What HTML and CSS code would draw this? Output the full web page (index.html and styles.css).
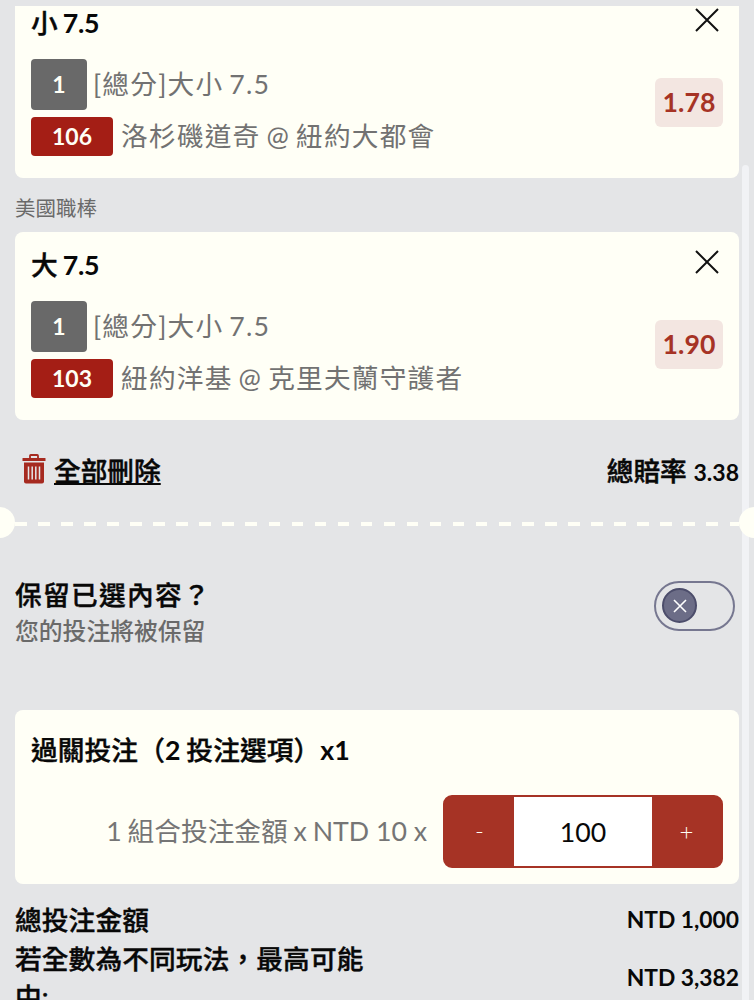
FILE: index.html
```html
<!DOCTYPE html>
<html lang="zh-Hant">
<head>
  <meta charset="UTF-8">
  <meta name="viewport" content="width=device-width, initial-scale=1.0">
  <title>投注單</title>
  <link rel="stylesheet" href="styles.css">
</head>
<body>
  <div class="slip">
    <div class="bets">
      <div class="card bet">
        <div class="bet-head">
          <h3 class="title">小 <b>7.5</b></h3>
          <svg class="close" viewBox="0 0 24 24"><path d="M1 1L23 23M23 1L1 23"/></svg>
        </div>
        <div class="bet-body">
          <div class="bet-info">
            <div class="line market"><span class="tag gray">1</span><span>[總分]大小 7.5</span></div>
            <div class="line match"><span class="tag red">106</span><span>洛杉磯道奇 @ 紐約大都會</span></div>
          </div>
          <span class="odds">1.78</span>
        </div>
      </div>

      <p class="league">美國職棒</p>

      <div class="card bet">
        <div class="bet-head">
          <h3 class="title">大 <b>7.5</b></h3>
          <svg class="close" viewBox="0 0 24 24"><path d="M1 1L23 23M23 1L1 23"/></svg>
        </div>
        <div class="bet-body">
          <div class="bet-info">
            <div class="line market"><span class="tag gray">1</span><span>[總分]大小 7.5</span></div>
            <div class="line match"><span class="tag red">103</span><span>紐約洋基 @ 克里夫蘭守護者</span></div>
          </div>
          <span class="odds">1.90</span>
        </div>
      </div>
    </div>

    <div class="summary">
      <div class="remove">
        <svg class="trash" viewBox="0 0 24 30">
          <path class="trash-line" d="M8 4.500V1.800Q8 1 8.800 1H15.200Q16 1 16 1.800V4.500"/>
          <path class="trash-fill" d="M1 4H23Q23.500 4 23.500 4.500V7H.5V4.500Q.5 4 1 4Z"/>
          <path class="trash-fill" d="M2 8.500H22V27.500Q22 29.500 20 29.500H4Q2 29.500 2 27.500Z"/>
          <path class="trash-slot" d="M6.500 12.500V25.500M10.200 12.500V25.500M13.800 12.500V25.500M17.500 12.500V25.500"/>
        </svg>
        <a class="remove-link">全部刪除</a>
      </div>
      <span class="total-odds">總賠率 <b>3.38</b></span>
    </div>

    <div class="tear">
      <span class="notch"></span>
      <span class="dashes"></span>
      <span class="notch"></span>
    </div>

    <div class="keep">
      <div>
        <h3 class="keep-title">保留已選內容？</h3>
        <p class="keep-note">您的投注將被保留</p>
      </div>
      <div class="toggle">
        <span class="knob">
          <svg viewBox="0 0 14 14"><path d="M1 1L13 13M13 1L1 13"/></svg>
        </span>
      </div>
    </div>

    <div class="card stake">
      <h3 class="title">過關投注（<b>2</b> 投注選項）<b>x1</b></h3>
      <div class="stake-row">
        <span class="stake-label">1 組合投注金額 x <span class="unit">NTD 10 x</span></span>
        <div class="stepper">
          <span class="step">-</span>
          <span class="amount">100</span>
          <span class="step plus">+</span>
        </div>
      </div>
    </div>

    <div class="totals">
      <div class="total">
        <span class="total-name">總投注金額</span>
        <span class="total-value">NTD 1,000</span>
      </div>
      <div class="total">
        <span class="total-name">若全數為不同玩法，最高可能中:</span>
        <span class="total-value">NTD 3,382</span>
      </div>
    </div>

    <div class="scrollbar"></div>
  </div>
</body>
</html>
```
FILE: styles.css
```css
* {
  box-sizing: border-box;
}

body {
  margin: 0;
  background: #e4e5e7;
  color: #080808;
  font-family: Lato, "Noto Sans CJK TC", sans-serif;
  font-size: 26.7px;
  overflow: hidden;
}

h3,
p {
  margin: 0;
  font-size: inherit;
}

.slip {
  position: relative;
  height: 1000px;
  padding-top: 6px;
  overflow: hidden;
}

/* scrolled list, the first card is cut at the top */
.bets {
  height: 414px;
  padding: 0 15px;
  display: flex;
  flex-direction: column;
  justify-content: flex-end;
  overflow: hidden;
}

.card {
  flex: none;
  background: #fffff6;
  border-radius: 8px;
  padding: 0 16px;
}

.bet {
  height: 188px;
}

.bet-head {
  display: flex;
  justify-content: space-between;
  padding-top: 13px;
  height: 69px;
}

.title {
  font-weight: 500;
  line-height: 40px;
  -webkit-text-stroke: 0.4px;
}

.title b {
  font-weight: 700;
  -webkit-text-stroke: 0;
}

.bet .title {
  letter-spacing: -0.3px;
  word-spacing: -1px;
}

.stake .title {
  letter-spacing: 0.1px;
  word-spacing: -1px;
}

.close {
  width: 24px;
  height: 24px;
  margin: 5px 4px 0 0;
  fill: none;
  stroke: #111;
  stroke-width: 2;
}

.bet-body {
  display: flex;
  justify-content: space-between;
}

.bet-info {
  display: flex;
  flex-direction: column;
  gap: 7px;
  color: #727272;
}

.line {
  display: flex;
  align-items: center;
  gap: 8px;
  letter-spacing: 1.2px;
  word-spacing: -2px;
  font-weight: 400;
  white-space: nowrap;
  line-height: 37px;
}

.market {
  gap: 6px;
}

.tag {
  border-radius: 4px;
  color: #fffff6;
  font-size: 23px;
  font-weight: 700;
  letter-spacing: 0;
  text-align: center;
}

.gray {
  width: 56px;
  line-height: 51px;
  background: #696969;
}

.red {
  width: 82px;
  line-height: 39px;
  background: #a41e15;
}

.odds {
  width: 68px;
  height: 49px;
  margin-top: 19px;
  border-radius: 6px;
  background: #f3e6e1;
  color: #a63325;
  font-weight: 700;
  line-height: 49px;
  text-align: center;
}

.league {
  flex: none;
  height: 54px;
  color: #6a6a6a;
  font-size: 20.5px;
  line-height: 61px;
}

.summary {
  display: flex;
  justify-content: space-between;
  align-items: center;
  height: 87px;
  padding: 11px 15px 0 22px;
}

.remove {
  display: flex;
  align-items: center;
  gap: 8px;
}

.trash {
  width: 24px;
  height: 30px;
}

.trash-line {
  fill: none;
  stroke: #a62a20;
  stroke-width: 1.8;
}

.trash-fill {
  fill: #a62a20;
}

.trash-slot {
  stroke: #e4e5e7;
  stroke-width: 1.5;
}

.remove-link {
  font-weight: 500;
  -webkit-text-stroke: 0.5px;
  text-decoration: underline;
  text-decoration-thickness: 2px;
  text-underline-offset: 2px;
  text-decoration-skip-ink: none;
}

.total-odds {
  font-weight: 500;
  -webkit-text-stroke: 0.5px;
}

.total-odds b {
  font-size: 23px;
  font-weight: 700;
  -webkit-text-stroke: 0;
}

.tear {
  display: flex;
  align-items: center;
  justify-content: space-between;
  height: 31px;
  margin: 0 -16px;
}

.notch {
  position: relative;
  z-index: 1;
  flex: none;
  width: 31px;
  height: 31px;
  border-radius: 50%;
  background: #fffff6;
}

.dashes {
  flex: 1;
  height: 4px;
  margin-top: 2px;
  background: repeating-linear-gradient(90deg, #fffff6 0 11.5px, transparent 11.500px 23.050px);
}

.keep {
  display: flex;
  justify-content: space-between;
  height: 172px;
  padding: 37px 19px 0 15px;
}

.keep-title {
  font-weight: 500;
  -webkit-text-stroke: 0.4px;
  letter-spacing: 1.3px;
  line-height: 40px;
}

.keep-note {
  color: #6a6a6a;
  font-size: 23.8px;
  font-weight: 500;
  line-height: 32px;
}

.toggle {
  width: 81px;
  height: 50px;
  margin-top: 6px;
  padding: 5px 6px;
  border: 2px solid #767790;
  border-radius: 25px;
}

.knob {
  display: flex;
  align-items: center;
  justify-content: center;
  width: 35px;
  height: 35px;
  border: 2px solid #4c4d6b;
  border-radius: 50%;
  background: #6c6d87;
}

.knob svg {
  width: 14px;
  height: 14px;
  fill: none;
  stroke: #fff;
  stroke-width: 1.6;
}

.stake {
  height: 174px;
  margin: 0 15px;
  padding-top: 20px;
}

.stake-row {
  display: flex;
  align-items: center;
  justify-content: flex-end;
  gap: 16px;
  margin-top: 25px;
}

.stake-label {
  margin-top: -4px;
  color: #757575;
  font-weight: 400;
  word-spacing: -1px;
}

.unit {
  word-spacing: 0;
}

.stepper {
  display: grid;
  grid-template-columns: 69px 138px 69px;
  width: 280px;
  height: 73px;
  border: 2px solid #a63325;
  border-radius: 9px;
  background: #a63325;
  line-height: 69px;
  text-align: center;
}

.step {
  color: #fffff6;
  font-size: 24px;
  font-weight: 300;
  line-height: 67px;
}

.amount {
  height: 69px;
  padding-top: 1px;
  background: #fff;
}

.totals {
  padding: 17px 15px 0;
}

.total {
  display: flex;
  align-items: center;
  justify-content: space-between;
}

.total-name {
  width: 362px;
  font-weight: 500;
  -webkit-text-stroke: 0.4px;
  letter-spacing: 0.12px;
  line-height: 38.5px;
}

.total-value {
  margin-top: -3px;
  font-size: 22.8px;
  font-weight: 700;
}

.scrollbar {
  position: absolute;
  top: 165px;
  right: 5px;
  bottom: 0;
  width: 7px;
  border-radius: 4px 4px 0 0;
  background: #f1f2f5;
}
```
